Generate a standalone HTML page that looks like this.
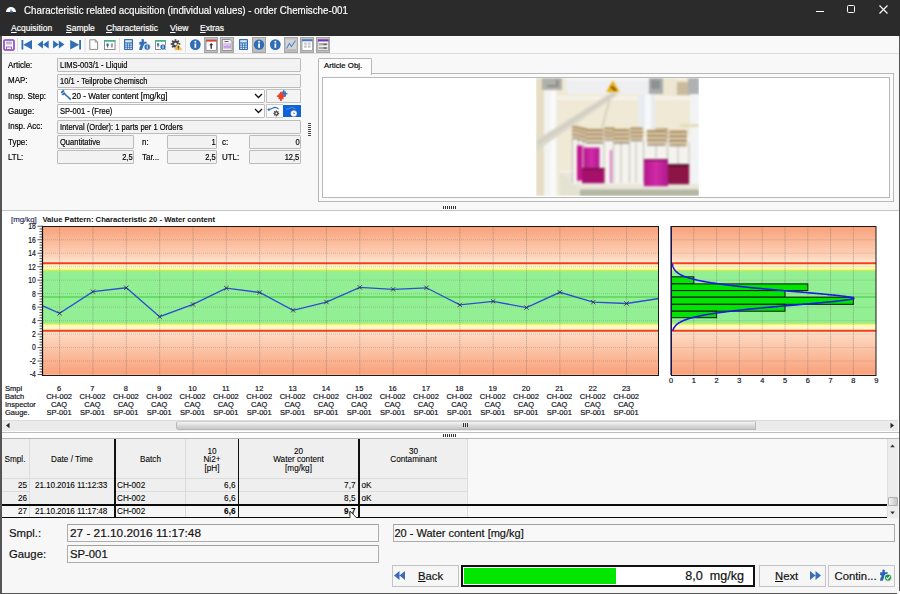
<!DOCTYPE html>
<html><head><meta charset="utf-8">
<style>
*{box-sizing:border-box;margin:0;padding:0}
html,body{width:900px;height:594px;overflow:hidden}
body{position:relative;background:#f8f8f8;font-family:"Liberation Sans",sans-serif;color:#000}
.a{position:absolute}
.t{position:absolute;white-space:pre;line-height:1}
#title{left:0;top:0;width:900px;height:36px;background:#2b2b2b}
#tb{left:0;top:36px;width:900px;height:18px;background:#f9f9f9;border-top:1px solid #fdfdfd;border-bottom:1.5px solid #dddddd}
.fld{position:absolute;height:14px;border:1px solid #bcbcbc;border-radius:1px;background:#f2f2f2;font-size:8.4px;line-height:12px;padding-left:2px;white-space:pre;overflow:hidden}
.lbl{position:absolute;font-size:8.4px;white-space:pre;line-height:1}
.r{text-align:right;padding-right:0.5px;padding-left:0}
.sep{position:absolute;width:1px;background:#dcdcdc}
.fld,.lbl,.t{-webkit-text-stroke:0.18px currentColor}
.n{display:inline-block;transform:scaleX(.9);transform-origin:0 50%}
.nr{display:inline-block;transform:scaleX(.9);transform-origin:100% 50%}
.nl{display:inline-block;transform:scaleX(.95);transform-origin:0 50%}
u{text-underline-offset:0.6px;text-decoration-thickness:1px}
.tbtn{position:absolute;top:37px;height:15px;background:#c9c9c9;border:1px solid #a8a8a8}
</style></head><body>

<!-- window borders -->
<div class="a" style="left:0;top:36px;width:1.5px;height:558px;background:#555;z-index:50"></div>
<div class="a" style="left:899px;top:36px;width:1px;height:555px;background:#555;z-index:50"></div>
<div class="a" style="left:0;top:592.5px;width:897px;height:1.5px;background:#555;z-index:50"></div><div class="a" style="left:0;top:594px;width:900px;height:0px"></div>

<!-- title + menu -->
<div id="title" class="a">
  <svg class="a" style="left:5px;top:4px" width="12" height="9" viewBox="0 0 12 9">
    <path d="M1 8 A5 5 0 0 1 11 8 Z" fill="#fff"/>
    <path d="M5 8 L6 4.5 L7 8 Z" fill="#3d7cc9"/>
    <rect x="5" y="7" width="3" height="1.5" fill="#3d7cc9"/>
  </svg>
  <div class="t" style="left:24px;top:4.6px;font-size:10.7px;color:#fff;transform:scaleX(0.912);transform-origin:0 0">Characteristic related acquisition (individual values) - order Chemische-001</div>
  <div class="a" style="left:816px;top:11px;width:8px;height:1px;background:#fff"></div>
  <div class="a" style="left:847px;top:5px;width:8px;height:8px;border:1px solid #fff;border-radius:1.5px"></div>
  <svg class="a" style="left:879px;top:5px" width="9" height="9" viewBox="0 0 9 9"><path d="M0.5 0.5 L8.5 8.5 M8.5 0.5 L0.5 8.5" stroke="#fff" stroke-width="1.1"/></svg>
  <div class="t" style="left:11px;top:23.5px;font-size:8.5px;color:#fff"><u>A</u>cquisition</div>
  <div class="t" style="left:66px;top:23.5px;font-size:8.5px;color:#fff"><u>S</u>ample</div>
  <div class="t" style="left:106px;top:23.5px;font-size:8.5px;color:#fff"><u>C</u>haracteristic</div>
  <div class="t" style="left:170px;top:23.5px;font-size:8.5px;color:#fff"><u>V</u>iew</div>
  <div class="t" style="left:200px;top:23.5px;font-size:8.5px;color:#fff"><u>E</u>xtras</div>
</div>

<!-- toolbar -->
<div id="tb" class="a"></div>
<svg class="a" style="left:0;top:36px" width="340" height="18" viewBox="0 36 340 18">
 <defs>
  <linearGradient id="tgl" x1="0" y1="0" x2="0" y2="1"><stop offset="0" stop-color="#c4c4c4"/><stop offset="1" stop-color="#bdbdbd"/></linearGradient>
 </defs>
 <!-- separators -->
 <g fill="#dedede"><rect x="17" y="38" width="1" height="14"/><rect x="84.5" y="38" width="1" height="14"/><rect x="119" y="38" width="1" height="14"/><rect x="185" y="38" width="1" height="14"/></g>
 <!-- save -->
 <rect x="4" y="40" width="10" height="10" rx="1" fill="none" stroke="#8b3fc0" stroke-width="1.6"/>
 <rect x="6" y="41.5" width="6" height="3" fill="#b8b8c8"/>
 <rect x="6.5" y="47" width="5" height="2.5" fill="#fff" stroke="#8b3fc0" stroke-width="0.8"/>
 <!-- first -->
 <g fill="#2f6db5">
  <rect x="21.5" y="40" width="1.8" height="9.5"/>
  <path d="M23.3 44.7 L32 40 L32 49.5 Z"/>
  <path d="M37.5 44.5 L43 40.5 L43 48.5 Z M43 44.5 L48.7 40.5 L48.7 48.5 Z"/>
  <path d="M64.4 44.5 L58.8 40.5 L58.8 48.5 Z M58.8 44.5 L53.1 40.5 L53.1 48.5 Z"/>
  <path d="M79.2 44.7 L70.2 40 L70.2 49.5 Z"/>
  <rect x="79.2" y="40" width="1.8" height="9.5"/>
 </g>
 <!-- document -->
 <path d="M89.8 39.8 H95.5 L97.6 42 V49.4 H89.8 Z" fill="#fff" stroke="#8a8a8a" stroke-width="1"/>
 <path d="M95.3 39.8 V42.2 H97.6" fill="none" stroke="#8a8a8a" stroke-width="0.8"/>
 <!-- window icon -->
 <rect x="104.5" y="41" width="10.5" height="8.5" fill="#fff" stroke="#8a8a8a" stroke-width="1"/>
 <rect x="104" y="40" width="11.5" height="1.5" fill="#3cb878"/>
 <rect x="106.5" y="43.5" width="2.2" height="2.5" fill="#2f6db5"/><rect x="110.8" y="43.5" width="2.2" height="2.5" fill="#a0a0a0"/>
 <rect x="107" y="46" width="1.2" height="1.5" fill="#666"/><rect x="111.3" y="46" width="1.2" height="1.5" fill="#666"/>
 <!-- calculator -->
 <rect x="124" y="39" width="9" height="11" rx="0.8" fill="#2f6db5"/>
 <rect x="125.2" y="40.2" width="6.6" height="2.2" fill="#dfe8f4"/>
 <g fill="#fff"><rect x="125.3" y="43.5" width="1.5" height="1.2"/><rect x="127.8" y="43.5" width="1.5" height="1.2"/><rect x="130.3" y="43.5" width="1.5" height="1.2"/>
 <rect x="125.3" y="45.6" width="1.5" height="1.2"/><rect x="127.8" y="45.6" width="1.5" height="1.2"/><rect x="130.3" y="45.6" width="1.5" height="1.2"/>
 <rect x="125.3" y="47.7" width="1.5" height="1.2"/><rect x="127.8" y="47.7" width="1.5" height="1.2"/><rect x="130.3" y="47.7" width="1.5" height="1.2"/></g>
 <!-- puzzle i -->
 <g transform="translate(139.2 39) scale(0.98) translate(-880 -569.5)">
 <path d="M882.3 569.8 Q883.7 569.2 884.9 570 L884.7 572.2 H887.8 L887.4 574.3 H885.2 L884.2 577 L882.8 580.8 H880 L880.6 577.4 Q882 576.5 881.2 575.2 L880 575 L880.3 572.2 H882.6 Z" fill="#2f6db5"/>
 </g>
 <circle cx="147.2" cy="47" r="3.2" fill="#2f6db5" stroke="#f9f9f9" stroke-width="0.7"/>
 <rect x="146.7" y="46.2" width="1" height="2.4" fill="#fff"/><rect x="146.7" y="44.7" width="1" height="0.9" fill="#fff"/>
 <!-- window i -->
 <rect x="155.5" y="41" width="10" height="8.5" fill="#fff" stroke="#8a8a8a" stroke-width="1"/>
 <rect x="155" y="40" width="11" height="1.5" fill="#3cb878"/>
 <rect x="157" y="43.3" width="2.2" height="2.3" fill="#2f6db5"/><rect x="157.5" y="45.6" width="1.2" height="1.5" fill="#666"/>
 <circle cx="163" cy="47" r="3" fill="#2f6db5" stroke="#fff" stroke-width="0.6"/>
 <rect x="162.5" y="46.2" width="1" height="2.3" fill="#fff"/><rect x="162.5" y="44.8" width="1" height="0.9" fill="#fff"/>
 <!-- gear warning -->
 <g transform="translate(175.5 44)">
  <circle r="3.2" fill="#4a4a4a"/>
  <g fill="#4a4a4a"><rect x="-0.9" y="-4.8" width="1.8" height="9.6"/><rect x="-4.8" y="-0.9" width="9.6" height="1.8"/>
  <rect x="-0.9" y="-4.8" width="1.8" height="9.6" transform="rotate(45)"/><rect x="-0.9" y="-4.8" width="1.8" height="9.6" transform="rotate(-45)"/></g>
  <circle r="1.3" fill="#f9f9f9"/>
 </g>
 <path d="M178.3 43.8 L182.8 50.2 H173.8 Z" fill="#f2b535" stroke="#f9f9f9" stroke-width="0.6"/>
 <rect x="177.85" y="46" width="0.9" height="2.3" fill="#222"/><rect x="177.85" y="48.7" width="0.9" height="0.8" fill="#222"/>
 <!-- info -->
 <circle cx="195.3" cy="44.6" r="5.4" fill="#2f6db5"/>
 <rect x="194.5" y="43.5" width="1.7" height="4.3" fill="#fff"/><circle cx="195.35" cy="41.8" r="0.95" fill="#fff"/>
 <!-- toggled buttons -->
 <g fill="url(#tgl)" stroke="#a6a6a6" stroke-width="1">
  <rect x="204.5" y="37.5" width="13" height="15"/>
  <rect x="220.5" y="37.5" width="13" height="15"/>
  <rect x="252.5" y="37.5" width="13" height="15"/>
  <rect x="284.5" y="37.5" width="13" height="15"/>
  <rect x="300.5" y="37.5" width="13" height="15"/>
  <rect x="316.5" y="37.5" width="13" height="15"/>
 </g>
 <!-- calendar up -->
 <rect x="206" y="39.8" width="10.5" height="10.5" fill="#fff" stroke="#8a8a8a" stroke-width="0.8"/>
 <rect x="206" y="40" width="10.5" height="1.6" fill="#e33b2a"/>
 <path d="M211.2 43 L213.3 45.3 H211.9 V48.8 H210.5 V45.3 H209.1 Z" fill="#333"/>
 <!-- doc purple -->
 <path d="M222.3 39.5 H230 L232 41.5 V50.5 H222.3 Z" fill="#f0f0f0" stroke="#8a8a8a" stroke-width="0.9"/>
 <rect x="223.5" y="43.5" width="7.5" height="5" fill="#c6a0e0"/>
 <rect x="224.2" y="44.2" width="2.5" height="1.6" fill="#e6d4f2"/><rect x="227.5" y="44.2" width="2.5" height="1.6" fill="#e6d4f2"/>
 <rect x="224.5" y="41" width="4" height="1" fill="#666"/>
 <!-- calculator 2 -->
 <rect x="239" y="39" width="9" height="11" rx="0.8" fill="#2f6db5"/>
 <rect x="240.2" y="40.2" width="6.6" height="2.2" fill="#dfe8f4"/>
 <g fill="#fff"><rect x="240.3" y="43.5" width="1.5" height="1.2"/><rect x="242.8" y="43.5" width="1.5" height="1.2"/><rect x="245.3" y="43.5" width="1.5" height="1.2"/>
 <rect x="240.3" y="45.6" width="1.5" height="1.2"/><rect x="242.8" y="45.6" width="1.5" height="1.2"/><rect x="245.3" y="45.6" width="1.5" height="1.2"/>
 <rect x="240.3" y="47.7" width="1.5" height="1.2"/><rect x="242.8" y="47.7" width="1.5" height="1.2"/><rect x="245.3" y="47.7" width="1.5" height="1.2"/></g>
 <!-- info toggled -->
 <circle cx="259" cy="44.6" r="5.2" fill="#2f6db5"/>
 <rect x="258.2" y="43.5" width="1.7" height="4.3" fill="#fff"/><circle cx="259.05" cy="41.8" r="0.95" fill="#fff"/>
 <!-- info 2 -->
 <circle cx="275.3" cy="44.6" r="5.4" fill="#2f6db5"/>
 <rect x="274.5" y="43.5" width="1.7" height="4.3" fill="#fff"/><circle cx="275.35" cy="41.8" r="0.95" fill="#fff"/>
 <!-- chart toggled -->
 <rect x="286" y="39.5" width="10.5" height="11" fill="#d4d4d4"/>
 <path d="M286.5 48.5 L289.5 43.5 L291.5 46.5 L295.5 40.5" fill="none" stroke="#4f86c8" stroke-width="1.1"/>
 <path d="M286.5 50 L296 50" stroke="#9a9a9a" stroke-width="0.8"/>
 <!-- table toggled -->
 <rect x="302" y="39.5" width="10.5" height="11" fill="#fff" stroke="#9a9a9a" stroke-width="0.8"/>
 <rect x="302" y="39.5" width="10.5" height="1.8" fill="#3f7bc8"/>
 <g fill="#c8c8c8"><rect x="304" y="42.5" width="2.8" height="2.2"/><rect x="307.8" y="42.5" width="2.8" height="2.2"/><rect x="304" y="45.5" width="2.8" height="2.2"/><rect x="307.8" y="45.5" width="2.8" height="2.2"/></g>
 <!-- purple list toggled -->
 <rect x="318" y="39.5" width="10.5" height="11" fill="#fff" stroke="#9a9a9a" stroke-width="0.8"/>
 <rect x="318" y="39.5" width="10.5" height="2" fill="#7a2fb8"/>
 <g fill="#aaa"><rect x="319" y="43" width="8.5" height="2.5"/><rect x="319" y="46.8" width="8.5" height="2.5"/></g>
 <g fill="#444"><rect x="323.5" y="43.8" width="3" height="0.9"/><rect x="323.5" y="47.6" width="3" height="0.9"/></g>
</svg>


<!-- form -->
<div class="lbl" style="left:8px;top:61.3px"><span class="nl">Article:</span></div>
<div class="fld" style="left:57px;top:58px;width:244px"><span class="n">LIMS-003/1 - Lliquid</span></div>
<div class="lbl" style="left:8px;top:76.3px"><span class="nl">MAP:</span></div>
<div class="fld" style="left:57px;top:74px;width:244px"><span class="n">10/1 - Teilprobe Chemisch</span></div>
<div class="lbl" style="left:8px;top:92.3px"><span class="nl">Insp. Step:</span></div>
<div class="fld" style="left:57px;top:89px;width:208px;background:#fff;padding-left:13.5px"><span class="n" style="transform:scaleX(.97)">20 - Water content [mg/kg]</span></div>
<div class="lbl" style="left:8px;top:107.3px"><span class="nl">Gauge:</span></div>
<div class="fld" style="left:57px;top:104px;width:208px;background:#fff"><span class="n">SP-001 - (Free)</span></div>
<div class="lbl" style="left:8px;top:122.3px"><span class="nl">Insp. Acc:</span></div>
<div class="fld" style="left:57px;top:120px;width:244px"><span class="n">Interval (Order): 1 parts per 1 Orders</span></div>
<div class="lbl" style="left:8px;top:138.3px"><span class="nl">Type:</span></div>
<div class="fld" style="left:57px;top:135px;width:77px"><span class="n">Quantitative</span></div>
<div class="lbl" style="left:142px;top:138.3px"><span class="nl">n:</span></div>
<div class="fld r" style="left:167px;top:135px;width:50px"><span class="nr">1</span></div>
<div class="lbl" style="left:222px;top:138.3px"><span class="nl">c:</span></div>
<div class="fld r" style="left:249px;top:135px;width:52px"><span class="nr">0</span></div>
<div class="lbl" style="left:8px;top:153.3px"><span class="nl">LTL:</span></div>
<div class="fld r" style="left:57px;top:150px;width:77px"><span class="nr">2,5</span></div>
<div class="lbl" style="left:142px;top:153.3px"><span class="nl">Tar...</span></div>
<div class="fld r" style="left:167px;top:150px;width:50px"><span class="nr">2,5</span></div>
<div class="lbl" style="left:222px;top:153.3px"><span class="nl">UTL:</span></div>
<div class="fld r" style="left:249px;top:150px;width:52px"><span class="nr">12,5</span></div>
<!--FORMEXTRA--><svg class="a" style="left:57px;top:88px" width="16" height="14" viewBox="57 88 16 14">
 <path d="M60.5 92.2 L63.3 89.8 L64.6 91 L61.8 93.5 Z" fill="#2f6db5"/>
 <path d="M61.6 94.2 L64.2 91.9 L65.6 93.3 L63 95.6 Z" fill="#2f6db5"/>
 <path d="M64.2 93.5 L70.8 99.6" stroke="#2f6db5" stroke-width="1.6"/>
</svg>
<svg class="a" style="left:254px;top:93px" width="9" height="6" viewBox="0 0 9 6"><path d="M1 1 L4.5 4.5 L8 1" fill="none" stroke="#111" stroke-width="1.3"/></svg>
<svg class="a" style="left:254px;top:108px" width="9" height="6" viewBox="0 0 9 6"><path d="M1 1 L4.5 4.5 L8 1" fill="none" stroke="#111" stroke-width="1.3"/></svg>
<div class="a" style="left:265.5px;top:89px;width:35.5px;height:13.5px;border:1px solid #c2c2c2;background:#f4f4f4"></div>
<svg class="a" style="left:276px;top:90px" width="14" height="12" viewBox="276 90 14 12">
 <path d="M281.5 91.5 H283 V90.8 A0.8 0.8 0 0 1 284.6 90.8 V91.5 H286 V93 H286.8 A0.8 0.8 0 0 1 286.8 94.6 H286 V96.5 H281.5 Z" fill="#3a78c8"/>
 <path d="M278.5 93.5 H280 V92.6 A0.9 0.9 0 0 1 281.8 92.6 V93.5 H283.5 V95.2 H284.4 A0.9 0.9 0 0 1 284.4 97 H283.5 V99.2 H281.8 V100.2 A0.9 0.9 0 0 1 280 100.2 V99.2 H278.5 V97 H277.6 A0.9 0.9 0 0 1 277.6 95.2 H278.5 Z" fill="#e8402a"/>
</svg>
<div class="a" style="left:265.5px;top:104.3px;width:17px;height:13.3px;border:1px solid #c8c8c8;border-right:none;background:#fafafa"></div>
<div class="a" style="left:283px;top:104.8px;width:17.5px;height:12.7px;background:#0f63d8"></div>
<svg class="a" style="left:266px;top:105px" width="35" height="13" viewBox="266 105 35 13">
 <circle cx="268.8" cy="109.6" r="1.2" fill="#2f6db5"/>
 <path d="M268.8 109.6 Q271 109 273 108 Q275.5 106.5 278.5 109" fill="none" stroke="#2f6db5" stroke-width="1.2"/>
 <g transform="translate(276.3 113.4)"><circle r="2.1" fill="#4a4a4a"/><g fill="#4a4a4a"><rect x="-0.6" y="-2.9" width="1.2" height="5.8"/><rect x="-2.9" y="-0.6" width="5.8" height="1.2"/><rect x="-0.6" y="-2.9" width="1.2" height="5.8" transform="rotate(45)"/><rect x="-0.6" y="-2.9" width="1.2" height="5.8" transform="rotate(-45)"/></g><circle r="0.9" fill="#fafafa"/></g>
 <path d="M286 109.6 Q288 109 290 108 Q292.5 106.5 295.5 109" fill="none" stroke="#5a8ad8" stroke-width="1"/>
 <circle cx="293.8" cy="113.5" r="3" fill="#fff" stroke="#d9b070" stroke-width="0.5"/>
 <path d="M293.5 112 L295.2 113.8 L293.5 114.2 Z" fill="#2f6db5"/>
</svg>
<div class="a" style="left:308px;top:122.6px;width:3px;height:14px;background:repeating-linear-gradient(180deg,#444 0 1px,transparent 1px 2px)"></div>
<!--/FORMEXTRA-->

<!-- right panel -->
<div class="a" style="left:317.5px;top:73px;width:576.5px;height:129px;border:1.5px solid #b8b8b8;background:#fbfbfb"></div>
<div class="a" style="left:317.5px;top:58px;width:54.5px;height:16.5px;border:1.5px solid #b8b8b8;border-bottom:none;border-radius:1.5px 1.5px 0 0;background:#fdfdfd"></div>
<div class="t" style="left:324px;top:62px;font-size:7.8px">Article Obj.</div>
<div class="a" style="left:321.5px;top:77px;width:568.5px;height:121px;border:1.5px solid #b8b8b8;background:#fff"></div>
<div class="a" style="left:536px;top:78px;width:163px;height:118px;overflow:hidden"><svg style="filter:blur(0.9px);display:block" width="163" height="118" viewBox="536 78 163 118">
 <defs>
  <filter id="bl" x="0" y="0" width="1" height="1"><feGaussianBlur stdDeviation="0.55"/></filter>
  <linearGradient id="cap" x1="0" y1="0" x2="0" y2="1"><stop offset="0" stop-color="#e0d2b4"/><stop offset="0.14" stop-color="#9c7c4c"/><stop offset="0.28" stop-color="#f2e6cc"/><stop offset="0.42" stop-color="#94744a"/><stop offset="0.56" stop-color="#f4ead4"/><stop offset="0.7" stop-color="#9a7a4e"/><stop offset="0.85" stop-color="#ece0c6"/><stop offset="1" stop-color="#a8946e"/></linearGradient>
  <linearGradient id="glass" x1="0" y1="0" x2="1" y2="0"><stop offset="0" stop-color="#f4f2ee"/><stop offset="0.5" stop-color="#e6e4e0"/><stop offset="1" stop-color="#f6f4f2"/></linearGradient>
  <linearGradient id="mag" x1="0" y1="0" x2="1" y2="0"><stop offset="0" stop-color="#b4168a"/><stop offset="0.5" stop-color="#d02aa8"/><stop offset="1" stop-color="#b01a8c"/></linearGradient>
 </defs>
 <g>
 <rect x="536" y="78" width="163" height="118" fill="#efe9d5"/>
 <rect x="536" y="78" width="8" height="118" fill="#e6ddc4"/>
 <rect x="544" y="90" width="13" height="106" fill="#f3f3f2"/>
 <rect x="551" y="90" width="4" height="106" fill="#fbfbfc"/>
 <rect x="542" y="78" width="20" height="12" fill="#b0b0aa"/>
 <path d="M547 85 H556 V80 H558.5 V87 H547 Z" fill="#8c8c86"/>
 <rect x="557" y="96" width="142" height="4" fill="#f5f2e8"/>
 <path d="M566 78 H649 V89 Q649 94 644 94 H571 Q566 94 566 89 Z" fill="#eeeff1"/>
 <path d="M569 78 H649 V81 H569 Z" fill="#f4f4f5"/>
 <path d="M612.9 80.6 L619.5 92 H606.3 Z" fill="#ecac00"/>
 <path d="M611 86.5 L613.5 88.5 L616.2 90.5" stroke="#1a1a1a" stroke-width="1.3" fill="none"/>
 <rect x="649" y="78" width="14" height="16" fill="#a8acac"/>
 <rect x="651" y="80" width="9" height="9" fill="#8e9292"/>
 <rect x="663" y="78" width="14" height="18" fill="#ece6d2"/>
 <rect x="677" y="82" width="11" height="13" fill="#c9bb9c"/>
 <rect x="688" y="78" width="11" height="17" fill="#aeb2b2"/>
 <rect x="638" y="94" width="17" height="36" fill="#e8ecf0"/>
 <rect x="645" y="94" width="6" height="36" fill="#f7f8fa"/>
 <rect x="690" y="94" width="9" height="102" fill="#f2f3f5"/>
 <rect x="680" y="124" width="19" height="3" fill="#e6dcbc"/>
 <path d="M536 140 L612 92 L619 94 L536 151 Z" fill="#dad6ca"/>
 <path d="M538 143 L614 94" stroke="#c2beb2" stroke-width="1.8" stroke-dasharray="1.2 1.3"/>
 <path d="M601.5 130 L609.5 100" stroke="#d6d1bc" stroke-width="2"/>
<!-- tray -->
 <path d="M560 171.5 H578 L590 183 L699 184 V196 H560 Z" fill="#e9e7da"/>
 <path d="M560 171.5 H576" stroke="#f8f8f2" stroke-width="1.2" fill="none"/>
 <rect x="580" y="189.5" width="119" height="6.5" fill="#b2b6a2"/>
 <path d="M560 172 L580 189.5 V196 H560 Z" fill="#e4e2d2"/>
  <!-- glass -->
 <rect x="572" y="136" width="118" height="48" fill="#f6f5f2" opacity="0.8"/>
 <g stroke="#b8b6b0" stroke-width="0.9" fill="none">
  <path d="M572.5 138 V183 M578.5 138 V183 M584 140 V183 M604 140 V183 M613.5 140 V183 M629.5 140 V183 M643.5 140 V183 M667.5 142 V183 M689 142 V183 M621 142 V183 M636 142 V183 M656 145 V158 M678 145 V164"/>
 </g>
 <!-- caps -->
 <rect x="572" y="125.5" width="7" height="12.5" rx="1.8" fill="url(#cap)"/>
 <rect x="572.5" y="137.8" width="6" height="1.6" fill="#8c8270" opacity="0.7"/>
 <rect x="577" y="126.5" width="7" height="12.5" rx="1.8" fill="url(#cap)"/>
 <rect x="577.5" y="138.8" width="6" height="1.6" fill="#8c8270" opacity="0.7"/>
 <rect x="581" y="127.5" width="7" height="13" rx="1.8" fill="url(#cap)"/>
 <rect x="581.5" y="140.3" width="6" height="1.6" fill="#8c8270" opacity="0.7"/>
 <rect x="604" y="127" width="11" height="12.5" rx="1.8" fill="url(#cap)"/>
 <rect x="604.5" y="139.3" width="10" height="1.6" fill="#8c8270" opacity="0.7"/>
 <rect x="630" y="127" width="13" height="13" rx="1.8" fill="url(#cap)"/>
 <rect x="630.5" y="139.8" width="12" height="1.6" fill="#8c8270" opacity="0.7"/>
 <rect x="655" y="128" width="13" height="13" rx="1.8" fill="url(#cap)"/>
 <rect x="655.5" y="140.8" width="12" height="1.6" fill="#8c8270" opacity="0.7"/>
 <rect x="585.5" y="128.5" width="18" height="14" rx="1.8" fill="url(#cap)"/>
 <rect x="586.0" y="142.3" width="17" height="1.6" fill="#8c8270" opacity="0.7"/>
 <rect x="613.5" y="128.5" width="16" height="14" rx="1.8" fill="url(#cap)"/>
 <rect x="614.0" y="142.3" width="15" height="1.6" fill="#8c8270" opacity="0.7"/>
 <rect x="647" y="129.5" width="19" height="15" rx="1.8" fill="url(#cap)"/>
 <rect x="647.5" y="144.3" width="18" height="1.6" fill="#8c8270" opacity="0.7"/>
 <rect x="669" y="130" width="18" height="15" rx="1.8" fill="url(#cap)"/>
 <rect x="669.5" y="144.8" width="17" height="1.6" fill="#8c8270" opacity="0.7"/>
 <!-- liquids -->
 <rect x="577" y="145.5" width="5.5" height="35" fill="#c2168e"/>
 <rect x="583.5" y="147.5" width="16" height="21" fill="url(#mag)"/>
 <rect x="582" y="168" width="22.5" height="15.2" fill="#a5106a"/>
 <rect x="582" y="168" width="22.5" height="1.4" fill="#6e0c42"/>
 <rect x="610" y="150" width="2" height="33" fill="#d878c4"/>
 <rect x="644" y="159.4" width="24" height="26.8" fill="url(#mag)"/>
 <rect x="644" y="159.4" width="24" height="1.6" fill="#7c0c58"/>
 <rect x="668" y="164.4" width="21" height="19.8" fill="#8c1446"/>
 <rect x="668" y="164.4" width="21" height="1.8" fill="#3c0c20"/>
 </g>
</svg></div>


<!-- separator -->
<div class="a" style="left:443px;top:206px;width:14px;height:3px;background:repeating-linear-gradient(90deg,#333 0 1px,transparent 1px 2px)"></div>
<div class="a" style="left:0;top:210px;width:900px;height:1px;background:#c4c4c4"></div>
<div class="a" style="left:0;top:211px;width:900px;height:221px;background:#fff"></div>
<!--CHART--><svg class="a" style="left:0;top:211px" width="900" height="221" viewBox="0 211 900 221">
<defs>
<linearGradient id="orT" x1="0" y1="0" x2="0" y2="1"><stop offset="0" stop-color="#f9a07a"/><stop offset="0.85" stop-color="#fdd6bc"/><stop offset="1" stop-color="#ffeedc"/></linearGradient>
<linearGradient id="orB" x1="0" y1="0" x2="0" y2="1"><stop offset="0" stop-color="#ffe6d4"/><stop offset="0.12" stop-color="#fdd6bc"/><stop offset="1" stop-color="#f9a07a"/></linearGradient>
<linearGradient id="ylT" x1="0" y1="0" x2="0" y2="1"><stop offset="0" stop-color="#ffff9c"/><stop offset="0.45" stop-color="#fff6d4"/><stop offset="0.8" stop-color="#fff8c0"/><stop offset="1" stop-color="#f8f870"/></linearGradient>
<linearGradient id="ylB" x1="0" y1="1" x2="0" y2="0"><stop offset="0" stop-color="#ffff9c"/><stop offset="0.45" stop-color="#fff6d4"/><stop offset="0.8" stop-color="#fff8c0"/><stop offset="1" stop-color="#f8f870"/></linearGradient>
</defs>
<rect x="43" y="226.25" width="615.5" height="37.07" fill="url(#orT)"/>
<rect x="43" y="263.32" width="615.5" height="6.74" fill="url(#ylT)"/>
<rect x="43" y="270.06" width="615.5" height="53.92" fill="#93ef93"/>
<rect x="43" y="323.98" width="615.5" height="6.74" fill="url(#ylB)"/>
<rect x="43" y="330.72" width="615.5" height="44.03" fill="url(#orB)"/>
<line x1="43" x2="658.5" y1="270.06" y2="270.06" stroke="#eef22c" stroke-width="1.2"/>
<line x1="43" x2="658.5" y1="323.98" y2="323.98" stroke="#eef22c" stroke-width="1.2"/>
<line x1="43" x2="658.5" y1="239.73" y2="239.73" stroke="#606060" stroke-opacity="0.25" stroke-width="1" stroke-dasharray="1 1"/>
<line x1="43" x2="658.5" y1="253.21" y2="253.21" stroke="#606060" stroke-opacity="0.25" stroke-width="1" stroke-dasharray="1 1"/>
<line x1="43" x2="658.5" y1="266.69" y2="266.69" stroke="#606060" stroke-opacity="0.25" stroke-width="1" stroke-dasharray="1 1"/>
<line x1="43" x2="658.5" y1="280.17" y2="280.17" stroke="#606060" stroke-opacity="0.25" stroke-width="1" stroke-dasharray="1 1"/>
<line x1="43" x2="658.5" y1="293.65" y2="293.65" stroke="#606060" stroke-opacity="0.25" stroke-width="1" stroke-dasharray="1 1"/>
<line x1="43" x2="658.5" y1="307.13" y2="307.13" stroke="#606060" stroke-opacity="0.25" stroke-width="1" stroke-dasharray="1 1"/>
<line x1="43" x2="658.5" y1="320.61" y2="320.61" stroke="#606060" stroke-opacity="0.25" stroke-width="1" stroke-dasharray="1 1"/>
<line x1="43" x2="658.5" y1="334.09" y2="334.09" stroke="#606060" stroke-opacity="0.25" stroke-width="1" stroke-dasharray="1 1"/>
<line x1="43" x2="658.5" y1="347.57" y2="347.57" stroke="#606060" stroke-opacity="0.25" stroke-width="1" stroke-dasharray="1 1"/>
<line x1="43" x2="658.5" y1="361.05" y2="361.05" stroke="#606060" stroke-opacity="0.25" stroke-width="1" stroke-dasharray="1 1"/>
<line x1="43" x2="658.5" y1="297.02" y2="297.02" stroke="#3ccc3c" stroke-width="1.1"/>
<line x1="43" x2="658.5" y1="263.32" y2="263.32" stroke="#f83c1c" stroke-width="2"/>
<line x1="43" x2="658.5" y1="330.72" y2="330.72" stroke="#f83c1c" stroke-width="2"/>
<line x1="59.60" x2="59.60" y1="226.25" y2="374.75" stroke="#606060" stroke-opacity="0.45" stroke-width="1" stroke-dasharray="1 1"/>
<line x1="92.95" x2="92.95" y1="226.25" y2="374.75" stroke="#606060" stroke-opacity="0.45" stroke-width="1" stroke-dasharray="1 1"/>
<line x1="126.30" x2="126.30" y1="226.25" y2="374.75" stroke="#606060" stroke-opacity="0.45" stroke-width="1" stroke-dasharray="1 1"/>
<line x1="159.65" x2="159.65" y1="226.25" y2="374.75" stroke="#606060" stroke-opacity="0.45" stroke-width="1" stroke-dasharray="1 1"/>
<line x1="193.00" x2="193.00" y1="226.25" y2="374.75" stroke="#606060" stroke-opacity="0.45" stroke-width="1" stroke-dasharray="1 1"/>
<line x1="226.35" x2="226.35" y1="226.25" y2="374.75" stroke="#606060" stroke-opacity="0.45" stroke-width="1" stroke-dasharray="1 1"/>
<line x1="259.70" x2="259.70" y1="226.25" y2="374.75" stroke="#606060" stroke-opacity="0.45" stroke-width="1" stroke-dasharray="1 1"/>
<line x1="293.05" x2="293.05" y1="226.25" y2="374.75" stroke="#606060" stroke-opacity="0.45" stroke-width="1" stroke-dasharray="1 1"/>
<line x1="326.40" x2="326.40" y1="226.25" y2="374.75" stroke="#606060" stroke-opacity="0.45" stroke-width="1" stroke-dasharray="1 1"/>
<line x1="359.75" x2="359.75" y1="226.25" y2="374.75" stroke="#606060" stroke-opacity="0.45" stroke-width="1" stroke-dasharray="1 1"/>
<line x1="393.10" x2="393.10" y1="226.25" y2="374.75" stroke="#606060" stroke-opacity="0.45" stroke-width="1" stroke-dasharray="1 1"/>
<line x1="426.45" x2="426.45" y1="226.25" y2="374.75" stroke="#606060" stroke-opacity="0.45" stroke-width="1" stroke-dasharray="1 1"/>
<line x1="459.80" x2="459.80" y1="226.25" y2="374.75" stroke="#606060" stroke-opacity="0.45" stroke-width="1" stroke-dasharray="1 1"/>
<line x1="493.15" x2="493.15" y1="226.25" y2="374.75" stroke="#606060" stroke-opacity="0.45" stroke-width="1" stroke-dasharray="1 1"/>
<line x1="526.50" x2="526.50" y1="226.25" y2="374.75" stroke="#606060" stroke-opacity="0.45" stroke-width="1" stroke-dasharray="1 1"/>
<line x1="559.85" x2="559.85" y1="226.25" y2="374.75" stroke="#606060" stroke-opacity="0.45" stroke-width="1" stroke-dasharray="1 1"/>
<line x1="593.20" x2="593.20" y1="226.25" y2="374.75" stroke="#606060" stroke-opacity="0.45" stroke-width="1" stroke-dasharray="1 1"/>
<line x1="626.55" x2="626.55" y1="226.25" y2="374.75" stroke="#606060" stroke-opacity="0.45" stroke-width="1" stroke-dasharray="1 1"/>
<clipPath id="cp"><rect x="43" y="226" width="615.5" height="149"/></clipPath>
<path d="M26.25 298.77 L59.60 313.33 L92.95 291.63 L126.30 287.79 L159.65 316.70 L193.00 304.43 L226.35 288.19 L259.70 292.50 L293.05 310.30 L326.40 302.01 L359.75 287.38 L393.10 289.34 L426.45 287.79 L459.80 304.91 L493.15 301.33 L526.50 307.60 L559.85 292.30 L593.20 302.21 L626.55 303.49 L659.90 298.37" fill="none" stroke="#2a4ed6" stroke-width="1.3" clip-path="url(#cp)"/>
<path d="M57.40 311.13 L61.80 315.53 M61.80 311.13 L57.40 315.53" stroke="#2a2a3a" stroke-width="0.8"/>
<path d="M90.75 289.43 L95.15 293.83 M95.15 289.43 L90.75 293.83" stroke="#2a2a3a" stroke-width="0.8"/>
<path d="M124.10 285.59 L128.50 289.99 M128.50 285.59 L124.10 289.99" stroke="#2a2a3a" stroke-width="0.8"/>
<path d="M157.45 314.50 L161.85 318.90 M161.85 314.50 L157.45 318.90" stroke="#2a2a3a" stroke-width="0.8"/>
<path d="M190.80 302.23 L195.20 306.63 M195.20 302.23 L190.80 306.63" stroke="#2a2a3a" stroke-width="0.8"/>
<path d="M224.15 285.99 L228.55 290.39 M228.55 285.99 L224.15 290.39" stroke="#2a2a3a" stroke-width="0.8"/>
<path d="M257.50 290.30 L261.90 294.70 M261.90 290.30 L257.50 294.70" stroke="#2a2a3a" stroke-width="0.8"/>
<path d="M290.85 308.10 L295.25 312.50 M295.25 308.10 L290.85 312.50" stroke="#2a2a3a" stroke-width="0.8"/>
<path d="M324.20 299.81 L328.60 304.21 M328.60 299.81 L324.20 304.21" stroke="#2a2a3a" stroke-width="0.8"/>
<path d="M357.55 285.18 L361.95 289.58 M361.95 285.18 L357.55 289.58" stroke="#2a2a3a" stroke-width="0.8"/>
<path d="M390.90 287.14 L395.30 291.54 M395.30 287.14 L390.90 291.54" stroke="#2a2a3a" stroke-width="0.8"/>
<path d="M424.25 285.59 L428.65 289.99 M428.65 285.59 L424.25 289.99" stroke="#2a2a3a" stroke-width="0.8"/>
<path d="M457.60 302.71 L462.00 307.11 M462.00 302.71 L457.60 307.11" stroke="#2a2a3a" stroke-width="0.8"/>
<path d="M490.95 299.13 L495.35 303.53 M495.35 299.13 L490.95 303.53" stroke="#2a2a3a" stroke-width="0.8"/>
<path d="M524.30 305.40 L528.70 309.80 M528.70 305.40 L524.30 309.80" stroke="#2a2a3a" stroke-width="0.8"/>
<path d="M557.65 290.10 L562.05 294.50 M562.05 290.10 L557.65 294.50" stroke="#2a2a3a" stroke-width="0.8"/>
<path d="M591.00 300.01 L595.40 304.41 M595.40 300.01 L591.00 304.41" stroke="#2a2a3a" stroke-width="0.8"/>
<path d="M624.35 301.29 L628.75 305.69 M628.75 301.29 L624.35 305.69" stroke="#2a2a3a" stroke-width="0.8"/>
<rect x="42.5" y="226.5" width="616" height="149" fill="none" stroke="#1a1a1a" stroke-width="1"/>
<line x1="42.5" x2="42.5" y1="226" y2="376" stroke="#000" stroke-width="1.2"/>
<line x1="37.5" x2="43" y1="226.25" y2="226.25" stroke="#222" stroke-width="0.8"/>
<line x1="39.5" x2="43" y1="228.95" y2="228.95" stroke="#222" stroke-width="0.8"/>
<line x1="39.5" x2="43" y1="231.64" y2="231.64" stroke="#222" stroke-width="0.8"/>
<line x1="39.5" x2="43" y1="234.34" y2="234.34" stroke="#222" stroke-width="0.8"/>
<line x1="39.5" x2="43" y1="237.03" y2="237.03" stroke="#222" stroke-width="0.8"/>
<line x1="37.5" x2="43" y1="239.73" y2="239.73" stroke="#222" stroke-width="0.8"/>
<line x1="39.5" x2="43" y1="242.43" y2="242.43" stroke="#222" stroke-width="0.8"/>
<line x1="39.5" x2="43" y1="245.12" y2="245.12" stroke="#222" stroke-width="0.8"/>
<line x1="39.5" x2="43" y1="247.82" y2="247.82" stroke="#222" stroke-width="0.8"/>
<line x1="39.5" x2="43" y1="250.51" y2="250.51" stroke="#222" stroke-width="0.8"/>
<line x1="37.5" x2="43" y1="253.21" y2="253.21" stroke="#222" stroke-width="0.8"/>
<line x1="39.5" x2="43" y1="255.91" y2="255.91" stroke="#222" stroke-width="0.8"/>
<line x1="39.5" x2="43" y1="258.60" y2="258.60" stroke="#222" stroke-width="0.8"/>
<line x1="39.5" x2="43" y1="261.30" y2="261.30" stroke="#222" stroke-width="0.8"/>
<line x1="39.5" x2="43" y1="263.99" y2="263.99" stroke="#222" stroke-width="0.8"/>
<line x1="37.5" x2="43" y1="266.69" y2="266.69" stroke="#222" stroke-width="0.8"/>
<line x1="39.5" x2="43" y1="269.39" y2="269.39" stroke="#222" stroke-width="0.8"/>
<line x1="39.5" x2="43" y1="272.08" y2="272.08" stroke="#222" stroke-width="0.8"/>
<line x1="39.5" x2="43" y1="274.78" y2="274.78" stroke="#222" stroke-width="0.8"/>
<line x1="39.5" x2="43" y1="277.47" y2="277.47" stroke="#222" stroke-width="0.8"/>
<line x1="37.5" x2="43" y1="280.17" y2="280.17" stroke="#222" stroke-width="0.8"/>
<line x1="39.5" x2="43" y1="282.87" y2="282.87" stroke="#222" stroke-width="0.8"/>
<line x1="39.5" x2="43" y1="285.56" y2="285.56" stroke="#222" stroke-width="0.8"/>
<line x1="39.5" x2="43" y1="288.26" y2="288.26" stroke="#222" stroke-width="0.8"/>
<line x1="39.5" x2="43" y1="290.95" y2="290.95" stroke="#222" stroke-width="0.8"/>
<line x1="37.5" x2="43" y1="293.65" y2="293.65" stroke="#222" stroke-width="0.8"/>
<line x1="39.5" x2="43" y1="296.35" y2="296.35" stroke="#222" stroke-width="0.8"/>
<line x1="39.5" x2="43" y1="299.04" y2="299.04" stroke="#222" stroke-width="0.8"/>
<line x1="39.5" x2="43" y1="301.74" y2="301.74" stroke="#222" stroke-width="0.8"/>
<line x1="39.5" x2="43" y1="304.43" y2="304.43" stroke="#222" stroke-width="0.8"/>
<line x1="37.5" x2="43" y1="307.13" y2="307.13" stroke="#222" stroke-width="0.8"/>
<line x1="39.5" x2="43" y1="309.83" y2="309.83" stroke="#222" stroke-width="0.8"/>
<line x1="39.5" x2="43" y1="312.52" y2="312.52" stroke="#222" stroke-width="0.8"/>
<line x1="39.5" x2="43" y1="315.22" y2="315.22" stroke="#222" stroke-width="0.8"/>
<line x1="39.5" x2="43" y1="317.91" y2="317.91" stroke="#222" stroke-width="0.8"/>
<line x1="37.5" x2="43" y1="320.61" y2="320.61" stroke="#222" stroke-width="0.8"/>
<line x1="39.5" x2="43" y1="323.31" y2="323.31" stroke="#222" stroke-width="0.8"/>
<line x1="39.5" x2="43" y1="326.00" y2="326.00" stroke="#222" stroke-width="0.8"/>
<line x1="39.5" x2="43" y1="328.70" y2="328.70" stroke="#222" stroke-width="0.8"/>
<line x1="39.5" x2="43" y1="331.39" y2="331.39" stroke="#222" stroke-width="0.8"/>
<line x1="37.5" x2="43" y1="334.09" y2="334.09" stroke="#222" stroke-width="0.8"/>
<line x1="39.5" x2="43" y1="336.79" y2="336.79" stroke="#222" stroke-width="0.8"/>
<line x1="39.5" x2="43" y1="339.48" y2="339.48" stroke="#222" stroke-width="0.8"/>
<line x1="39.5" x2="43" y1="342.18" y2="342.18" stroke="#222" stroke-width="0.8"/>
<line x1="39.5" x2="43" y1="344.87" y2="344.87" stroke="#222" stroke-width="0.8"/>
<line x1="37.5" x2="43" y1="347.57" y2="347.57" stroke="#222" stroke-width="0.8"/>
<line x1="39.5" x2="43" y1="350.27" y2="350.27" stroke="#222" stroke-width="0.8"/>
<line x1="39.5" x2="43" y1="352.96" y2="352.96" stroke="#222" stroke-width="0.8"/>
<line x1="39.5" x2="43" y1="355.66" y2="355.66" stroke="#222" stroke-width="0.8"/>
<line x1="39.5" x2="43" y1="358.35" y2="358.35" stroke="#222" stroke-width="0.8"/>
<line x1="37.5" x2="43" y1="361.05" y2="361.05" stroke="#222" stroke-width="0.8"/>
<line x1="39.5" x2="43" y1="363.75" y2="363.75" stroke="#222" stroke-width="0.8"/>
<line x1="39.5" x2="43" y1="366.44" y2="366.44" stroke="#222" stroke-width="0.8"/>
<line x1="39.5" x2="43" y1="369.14" y2="369.14" stroke="#222" stroke-width="0.8"/>
<line x1="39.5" x2="43" y1="371.83" y2="371.83" stroke="#222" stroke-width="0.8"/>
<line x1="37.5" x2="43" y1="374.53" y2="374.53" stroke="#222" stroke-width="0.8"/>
<text transform="translate(35.8 229.15) scale(0.82 1)" font-size="8.3" text-anchor="end" fill="#101020" stroke="#101020" stroke-width="0.18">18</text>
<text transform="translate(35.8 242.63) scale(0.82 1)" font-size="8.3" text-anchor="end" fill="#101020" stroke="#101020" stroke-width="0.18">16</text>
<text transform="translate(35.8 256.11) scale(0.82 1)" font-size="8.3" text-anchor="end" fill="#101020" stroke="#101020" stroke-width="0.18">14</text>
<text transform="translate(35.8 269.59) scale(0.82 1)" font-size="8.3" text-anchor="end" fill="#101020" stroke="#101020" stroke-width="0.18">12</text>
<text transform="translate(35.8 283.07) scale(0.82 1)" font-size="8.3" text-anchor="end" fill="#101020" stroke="#101020" stroke-width="0.18">10</text>
<text transform="translate(35.8 296.55) scale(0.82 1)" font-size="8.3" text-anchor="end" fill="#101020" stroke="#101020" stroke-width="0.18">8</text>
<text transform="translate(35.8 310.03) scale(0.82 1)" font-size="8.3" text-anchor="end" fill="#101020" stroke="#101020" stroke-width="0.18">6</text>
<text transform="translate(35.8 323.51) scale(0.82 1)" font-size="8.3" text-anchor="end" fill="#101020" stroke="#101020" stroke-width="0.18">4</text>
<text transform="translate(35.8 336.99) scale(0.82 1)" font-size="8.3" text-anchor="end" fill="#101020" stroke="#101020" stroke-width="0.18">2</text>
<text transform="translate(35.8 350.47) scale(0.82 1)" font-size="8.3" text-anchor="end" fill="#101020" stroke="#101020" stroke-width="0.18">0</text>
<text transform="translate(35.8 363.95) scale(0.82 1)" font-size="8.3" text-anchor="end" fill="#101020" stroke="#101020" stroke-width="0.18">-2</text>
<text transform="translate(35.8 377.43) scale(0.82 1)" font-size="8.3" text-anchor="end" fill="#101020" stroke="#101020" stroke-width="0.18">-4</text>
<text x="11" y="221.8" font-size="7.9" fill="#2a2a55" stroke="#2a2a55" stroke-width="0.15" textLength="25.8" lengthAdjust="spacingAndGlyphs">[mg/kg]</text>
<text x="42.4" y="221.8" font-size="7.9" font-weight="bold" fill="#111" textLength="172.6" lengthAdjust="spacingAndGlyphs">Value Pattern: Characteristic 20 - Water content</text>
<text x="5" y="390.6" font-size="7.5" fill="#101020" stroke="#101020" stroke-width="0.18">Smpl</text>
<text x="5" y="398.9" font-size="7.5" fill="#101020" stroke="#101020" stroke-width="0.18">Batch</text>
<text x="5" y="407.2" font-size="7.5" fill="#101020" stroke="#101020" stroke-width="0.18">Inspector</text>
<text x="5" y="415.2" font-size="7.5" fill="#101020" stroke="#101020" stroke-width="0.18">Gauge.</text>
<text x="59.10" y="390.6" font-size="7.5" text-anchor="middle" fill="#101020" stroke="#101020" stroke-width="0.18">6</text>
<text x="59.10" y="398.9" font-size="7.5" text-anchor="middle" fill="#101020" stroke="#101020" stroke-width="0.18">CH-002</text>
<text x="59.10" y="407.2" font-size="7.5" text-anchor="middle" fill="#101020" stroke="#101020" stroke-width="0.18">CAQ</text>
<text x="59.10" y="415.2" font-size="7.5" text-anchor="middle" fill="#101020" stroke="#101020" stroke-width="0.18">SP-001</text>
<text x="92.45" y="390.6" font-size="7.5" text-anchor="middle" fill="#101020" stroke="#101020" stroke-width="0.18">7</text>
<text x="92.45" y="398.9" font-size="7.5" text-anchor="middle" fill="#101020" stroke="#101020" stroke-width="0.18">CH-002</text>
<text x="92.45" y="407.2" font-size="7.5" text-anchor="middle" fill="#101020" stroke="#101020" stroke-width="0.18">CAQ</text>
<text x="92.45" y="415.2" font-size="7.5" text-anchor="middle" fill="#101020" stroke="#101020" stroke-width="0.18">SP-001</text>
<text x="125.80" y="390.6" font-size="7.5" text-anchor="middle" fill="#101020" stroke="#101020" stroke-width="0.18">8</text>
<text x="125.80" y="398.9" font-size="7.5" text-anchor="middle" fill="#101020" stroke="#101020" stroke-width="0.18">CH-002</text>
<text x="125.80" y="407.2" font-size="7.5" text-anchor="middle" fill="#101020" stroke="#101020" stroke-width="0.18">CAQ</text>
<text x="125.80" y="415.2" font-size="7.5" text-anchor="middle" fill="#101020" stroke="#101020" stroke-width="0.18">SP-001</text>
<text x="159.15" y="390.6" font-size="7.5" text-anchor="middle" fill="#101020" stroke="#101020" stroke-width="0.18">9</text>
<text x="159.15" y="398.9" font-size="7.5" text-anchor="middle" fill="#101020" stroke="#101020" stroke-width="0.18">CH-002</text>
<text x="159.15" y="407.2" font-size="7.5" text-anchor="middle" fill="#101020" stroke="#101020" stroke-width="0.18">CAQ</text>
<text x="159.15" y="415.2" font-size="7.5" text-anchor="middle" fill="#101020" stroke="#101020" stroke-width="0.18">SP-001</text>
<text x="192.50" y="390.6" font-size="7.5" text-anchor="middle" fill="#101020" stroke="#101020" stroke-width="0.18">10</text>
<text x="192.50" y="398.9" font-size="7.5" text-anchor="middle" fill="#101020" stroke="#101020" stroke-width="0.18">CH-002</text>
<text x="192.50" y="407.2" font-size="7.5" text-anchor="middle" fill="#101020" stroke="#101020" stroke-width="0.18">CAQ</text>
<text x="192.50" y="415.2" font-size="7.5" text-anchor="middle" fill="#101020" stroke="#101020" stroke-width="0.18">SP-001</text>
<text x="225.85" y="390.6" font-size="7.5" text-anchor="middle" fill="#101020" stroke="#101020" stroke-width="0.18">11</text>
<text x="225.85" y="398.9" font-size="7.5" text-anchor="middle" fill="#101020" stroke="#101020" stroke-width="0.18">CH-002</text>
<text x="225.85" y="407.2" font-size="7.5" text-anchor="middle" fill="#101020" stroke="#101020" stroke-width="0.18">CAQ</text>
<text x="225.85" y="415.2" font-size="7.5" text-anchor="middle" fill="#101020" stroke="#101020" stroke-width="0.18">SP-001</text>
<text x="259.20" y="390.6" font-size="7.5" text-anchor="middle" fill="#101020" stroke="#101020" stroke-width="0.18">12</text>
<text x="259.20" y="398.9" font-size="7.5" text-anchor="middle" fill="#101020" stroke="#101020" stroke-width="0.18">CH-002</text>
<text x="259.20" y="407.2" font-size="7.5" text-anchor="middle" fill="#101020" stroke="#101020" stroke-width="0.18">CAQ</text>
<text x="259.20" y="415.2" font-size="7.5" text-anchor="middle" fill="#101020" stroke="#101020" stroke-width="0.18">SP-001</text>
<text x="292.55" y="390.6" font-size="7.5" text-anchor="middle" fill="#101020" stroke="#101020" stroke-width="0.18">13</text>
<text x="292.55" y="398.9" font-size="7.5" text-anchor="middle" fill="#101020" stroke="#101020" stroke-width="0.18">CH-002</text>
<text x="292.55" y="407.2" font-size="7.5" text-anchor="middle" fill="#101020" stroke="#101020" stroke-width="0.18">CAQ</text>
<text x="292.55" y="415.2" font-size="7.5" text-anchor="middle" fill="#101020" stroke="#101020" stroke-width="0.18">SP-001</text>
<text x="325.90" y="390.6" font-size="7.5" text-anchor="middle" fill="#101020" stroke="#101020" stroke-width="0.18">14</text>
<text x="325.90" y="398.9" font-size="7.5" text-anchor="middle" fill="#101020" stroke="#101020" stroke-width="0.18">CH-002</text>
<text x="325.90" y="407.2" font-size="7.5" text-anchor="middle" fill="#101020" stroke="#101020" stroke-width="0.18">CAQ</text>
<text x="325.90" y="415.2" font-size="7.5" text-anchor="middle" fill="#101020" stroke="#101020" stroke-width="0.18">SP-001</text>
<text x="359.25" y="390.6" font-size="7.5" text-anchor="middle" fill="#101020" stroke="#101020" stroke-width="0.18">15</text>
<text x="359.25" y="398.9" font-size="7.5" text-anchor="middle" fill="#101020" stroke="#101020" stroke-width="0.18">CH-002</text>
<text x="359.25" y="407.2" font-size="7.5" text-anchor="middle" fill="#101020" stroke="#101020" stroke-width="0.18">CAQ</text>
<text x="359.25" y="415.2" font-size="7.5" text-anchor="middle" fill="#101020" stroke="#101020" stroke-width="0.18">SP-001</text>
<text x="392.60" y="390.6" font-size="7.5" text-anchor="middle" fill="#101020" stroke="#101020" stroke-width="0.18">16</text>
<text x="392.60" y="398.9" font-size="7.5" text-anchor="middle" fill="#101020" stroke="#101020" stroke-width="0.18">CH-002</text>
<text x="392.60" y="407.2" font-size="7.5" text-anchor="middle" fill="#101020" stroke="#101020" stroke-width="0.18">CAQ</text>
<text x="392.60" y="415.2" font-size="7.5" text-anchor="middle" fill="#101020" stroke="#101020" stroke-width="0.18">SP-001</text>
<text x="425.95" y="390.6" font-size="7.5" text-anchor="middle" fill="#101020" stroke="#101020" stroke-width="0.18">17</text>
<text x="425.95" y="398.9" font-size="7.5" text-anchor="middle" fill="#101020" stroke="#101020" stroke-width="0.18">CH-002</text>
<text x="425.95" y="407.2" font-size="7.5" text-anchor="middle" fill="#101020" stroke="#101020" stroke-width="0.18">CAQ</text>
<text x="425.95" y="415.2" font-size="7.5" text-anchor="middle" fill="#101020" stroke="#101020" stroke-width="0.18">SP-001</text>
<text x="459.30" y="390.6" font-size="7.5" text-anchor="middle" fill="#101020" stroke="#101020" stroke-width="0.18">18</text>
<text x="459.30" y="398.9" font-size="7.5" text-anchor="middle" fill="#101020" stroke="#101020" stroke-width="0.18">CH-002</text>
<text x="459.30" y="407.2" font-size="7.5" text-anchor="middle" fill="#101020" stroke="#101020" stroke-width="0.18">CAQ</text>
<text x="459.30" y="415.2" font-size="7.5" text-anchor="middle" fill="#101020" stroke="#101020" stroke-width="0.18">SP-001</text>
<text x="492.65" y="390.6" font-size="7.5" text-anchor="middle" fill="#101020" stroke="#101020" stroke-width="0.18">19</text>
<text x="492.65" y="398.9" font-size="7.5" text-anchor="middle" fill="#101020" stroke="#101020" stroke-width="0.18">CH-002</text>
<text x="492.65" y="407.2" font-size="7.5" text-anchor="middle" fill="#101020" stroke="#101020" stroke-width="0.18">CAQ</text>
<text x="492.65" y="415.2" font-size="7.5" text-anchor="middle" fill="#101020" stroke="#101020" stroke-width="0.18">SP-001</text>
<text x="526.00" y="390.6" font-size="7.5" text-anchor="middle" fill="#101020" stroke="#101020" stroke-width="0.18">20</text>
<text x="526.00" y="398.9" font-size="7.5" text-anchor="middle" fill="#101020" stroke="#101020" stroke-width="0.18">CH-002</text>
<text x="526.00" y="407.2" font-size="7.5" text-anchor="middle" fill="#101020" stroke="#101020" stroke-width="0.18">CAQ</text>
<text x="526.00" y="415.2" font-size="7.5" text-anchor="middle" fill="#101020" stroke="#101020" stroke-width="0.18">SP-001</text>
<text x="559.35" y="390.6" font-size="7.5" text-anchor="middle" fill="#101020" stroke="#101020" stroke-width="0.18">21</text>
<text x="559.35" y="398.9" font-size="7.5" text-anchor="middle" fill="#101020" stroke="#101020" stroke-width="0.18">CH-002</text>
<text x="559.35" y="407.2" font-size="7.5" text-anchor="middle" fill="#101020" stroke="#101020" stroke-width="0.18">CAQ</text>
<text x="559.35" y="415.2" font-size="7.5" text-anchor="middle" fill="#101020" stroke="#101020" stroke-width="0.18">SP-001</text>
<text x="592.70" y="390.6" font-size="7.5" text-anchor="middle" fill="#101020" stroke="#101020" stroke-width="0.18">22</text>
<text x="592.70" y="398.9" font-size="7.5" text-anchor="middle" fill="#101020" stroke="#101020" stroke-width="0.18">CH-002</text>
<text x="592.70" y="407.2" font-size="7.5" text-anchor="middle" fill="#101020" stroke="#101020" stroke-width="0.18">CAQ</text>
<text x="592.70" y="415.2" font-size="7.5" text-anchor="middle" fill="#101020" stroke="#101020" stroke-width="0.18">SP-001</text>
<text x="626.05" y="390.6" font-size="7.5" text-anchor="middle" fill="#101020" stroke="#101020" stroke-width="0.18">23</text>
<text x="626.05" y="398.9" font-size="7.5" text-anchor="middle" fill="#101020" stroke="#101020" stroke-width="0.18">CH-002</text>
<text x="626.05" y="407.2" font-size="7.5" text-anchor="middle" fill="#101020" stroke="#101020" stroke-width="0.18">CAQ</text>
<text x="626.05" y="415.2" font-size="7.5" text-anchor="middle" fill="#101020" stroke="#101020" stroke-width="0.18">SP-001</text>
<rect x="671.5" y="226.25" width="204.5" height="37.07" fill="url(#orT)"/>
<rect x="671.5" y="263.32" width="204.5" height="6.74" fill="url(#ylT)"/>
<rect x="671.5" y="270.06" width="204.5" height="53.92" fill="#93ef93"/>
<rect x="671.5" y="323.98" width="204.5" height="6.74" fill="url(#ylB)"/>
<rect x="671.5" y="330.72" width="204.5" height="44.03" fill="url(#orB)"/>
<line x1="671.5" x2="876" y1="270.06" y2="270.06" stroke="#eef22c" stroke-width="1.2"/>
<line x1="671.5" x2="876" y1="323.98" y2="323.98" stroke="#eef22c" stroke-width="1.2"/>
<line x1="671.5" x2="876" y1="239.73" y2="239.73" stroke="#606060" stroke-opacity="0.25" stroke-width="1" stroke-dasharray="1 1"/>
<line x1="671.5" x2="876" y1="253.21" y2="253.21" stroke="#606060" stroke-opacity="0.25" stroke-width="1" stroke-dasharray="1 1"/>
<line x1="671.5" x2="876" y1="266.69" y2="266.69" stroke="#606060" stroke-opacity="0.25" stroke-width="1" stroke-dasharray="1 1"/>
<line x1="671.5" x2="876" y1="280.17" y2="280.17" stroke="#606060" stroke-opacity="0.25" stroke-width="1" stroke-dasharray="1 1"/>
<line x1="671.5" x2="876" y1="293.65" y2="293.65" stroke="#606060" stroke-opacity="0.25" stroke-width="1" stroke-dasharray="1 1"/>
<line x1="671.5" x2="876" y1="307.13" y2="307.13" stroke="#606060" stroke-opacity="0.25" stroke-width="1" stroke-dasharray="1 1"/>
<line x1="671.5" x2="876" y1="320.61" y2="320.61" stroke="#606060" stroke-opacity="0.25" stroke-width="1" stroke-dasharray="1 1"/>
<line x1="671.5" x2="876" y1="334.09" y2="334.09" stroke="#606060" stroke-opacity="0.25" stroke-width="1" stroke-dasharray="1 1"/>
<line x1="671.5" x2="876" y1="347.57" y2="347.57" stroke="#606060" stroke-opacity="0.25" stroke-width="1" stroke-dasharray="1 1"/>
<line x1="671.5" x2="876" y1="361.05" y2="361.05" stroke="#606060" stroke-opacity="0.25" stroke-width="1" stroke-dasharray="1 1"/>
<line x1="671.5" x2="876" y1="297.02" y2="297.02" stroke="#3ccc3c" stroke-width="1.1"/>
<line x1="671.5" x2="876" y1="263.32" y2="263.32" stroke="#f83c1c" stroke-width="2"/>
<line x1="671.5" x2="876" y1="330.72" y2="330.72" stroke="#f83c1c" stroke-width="2"/>
<line x1="693.80" x2="693.80" y1="226.25" y2="374.75" stroke="#606060" stroke-opacity="0.45" stroke-width="1" stroke-dasharray="1 1"/>
<line x1="716.60" x2="716.60" y1="226.25" y2="374.75" stroke="#606060" stroke-opacity="0.45" stroke-width="1" stroke-dasharray="1 1"/>
<line x1="739.40" x2="739.40" y1="226.25" y2="374.75" stroke="#606060" stroke-opacity="0.45" stroke-width="1" stroke-dasharray="1 1"/>
<line x1="762.20" x2="762.20" y1="226.25" y2="374.75" stroke="#606060" stroke-opacity="0.45" stroke-width="1" stroke-dasharray="1 1"/>
<line x1="785.00" x2="785.00" y1="226.25" y2="374.75" stroke="#606060" stroke-opacity="0.45" stroke-width="1" stroke-dasharray="1 1"/>
<line x1="807.80" x2="807.80" y1="226.25" y2="374.75" stroke="#606060" stroke-opacity="0.45" stroke-width="1" stroke-dasharray="1 1"/>
<line x1="830.60" x2="830.60" y1="226.25" y2="374.75" stroke="#606060" stroke-opacity="0.45" stroke-width="1" stroke-dasharray="1 1"/>
<line x1="853.40" x2="853.40" y1="226.25" y2="374.75" stroke="#606060" stroke-opacity="0.45" stroke-width="1" stroke-dasharray="1 1"/>
<rect x="671.5" y="276.8" width="22.30" height="7.10" fill="#00e400" stroke="#111" stroke-width="1"/>
<rect x="671.5" y="283.9" width="136.30" height="6.70" fill="#00e400" stroke="#111" stroke-width="1"/>
<rect x="671.5" y="290.6" width="113.50" height="6.60" fill="#00e400" stroke="#111" stroke-width="1"/>
<rect x="671.5" y="297.2" width="181.90" height="7.10" fill="#00e400" stroke="#111" stroke-width="1"/>
<rect x="671.5" y="304.3" width="113.50" height="6.90" fill="#00e400" stroke="#111" stroke-width="1"/>
<rect x="671.5" y="311.2" width="45.10" height="6.50" fill="#00e400" stroke="#111" stroke-width="1"/>
<path d="M672.14 263.32 L672.16 263.45 L672.19 263.59 L672.21 263.72 L672.24 263.86 L672.26 263.99 L672.29 264.13 L672.32 264.26 L672.35 264.40 L672.38 264.53 L672.41 264.67 L672.44 264.80 L672.47 264.94 L672.50 265.07 L672.54 265.21 L672.57 265.34 L672.61 265.48 L672.65 265.61 L672.69 265.75 L672.73 265.88 L672.77 266.02 L672.82 266.15 L672.86 266.29 L672.91 266.42 L672.95 266.56 L673.00 266.69 L673.05 266.82 L673.11 266.96 L673.16 267.09 L673.21 267.23 L673.27 267.36 L673.33 267.50 L673.39 267.63 L673.45 267.77 L673.52 267.90 L673.58 268.04 L673.65 268.17 L673.72 268.31 L673.79 268.44 L673.87 268.58 L673.94 268.71 L674.02 268.85 L674.10 268.98 L674.19 269.12 L674.27 269.25 L674.36 269.39 L674.45 269.52 L674.55 269.66 L674.64 269.79 L674.74 269.93 L674.84 270.06 L674.95 270.19 L675.06 270.33 L675.17 270.46 L675.28 270.60 L675.40 270.73 L675.52 270.87 L675.64 271.00 L675.77 271.14 L675.90 271.27 L676.03 271.41 L676.17 271.54 L676.31 271.68 L676.46 271.81 L676.60 271.95 L676.76 272.08 L676.91 272.22 L677.08 272.35 L677.24 272.49 L677.41 272.62 L677.59 272.76 L677.76 272.89 L677.95 273.03 L678.14 273.16 L678.33 273.30 L678.53 273.43 L678.73 273.56 L678.94 273.70 L679.15 273.83 L679.37 273.97 L679.60 274.10 L679.83 274.24 L680.06 274.37 L680.30 274.51 L680.55 274.64 L680.80 274.78 L681.06 274.91 L681.33 275.05 L681.60 275.18 L681.88 275.32 L682.17 275.45 L682.46 275.59 L682.76 275.72 L683.06 275.86 L683.38 275.99 L683.70 276.13 L684.03 276.26 L684.36 276.40 L684.70 276.53 L685.06 276.67 L685.41 276.80 L685.78 276.93 L686.16 277.07 L686.54 277.20 L686.93 277.34 L687.33 277.47 L687.74 277.61 L688.16 277.74 L688.59 277.88 L689.03 278.01 L689.47 278.15 L689.93 278.28 L690.39 278.42 L690.87 278.55 L691.35 278.69 L691.84 278.82 L692.35 278.96 L692.86 279.09 L693.39 279.23 L693.92 279.36 L694.47 279.50 L695.03 279.63 L695.60 279.77 L696.17 279.90 L696.76 280.04 L697.37 280.17 L697.98 280.30 L698.60 280.44 L699.24 280.57 L699.89 280.71 L700.55 280.84 L701.22 280.98 L701.91 281.11 L702.60 281.25 L703.31 281.38 L704.04 281.52 L704.77 281.65 L705.52 281.79 L706.28 281.92 L707.05 282.06 L707.84 282.19 L708.64 282.33 L709.45 282.46 L710.28 282.60 L711.12 282.73 L711.97 282.87 L712.84 283.00 L713.72 283.14 L714.62 283.27 L715.52 283.41 L716.45 283.54 L717.38 283.67 L718.33 283.81 L719.30 283.94 L720.28 284.08 L721.27 284.21 L722.28 284.35 L723.30 284.48 L724.34 284.62 L725.39 284.75 L726.45 284.89 L727.53 285.02 L728.62 285.16 L729.73 285.29 L730.85 285.43 L731.99 285.56 L733.13 285.70 L734.30 285.83 L735.48 285.97 L736.67 286.10 L737.87 286.24 L739.09 286.37 L740.32 286.51 L741.57 286.64 L742.83 286.78 L744.10 286.91 L745.39 287.04 L746.69 287.18 L748.00 287.31 L749.33 287.45 L750.67 287.58 L752.02 287.72 L753.38 287.85 L754.75 287.99 L756.14 288.12 L757.54 288.26 L758.94 288.39 L760.36 288.53 L761.80 288.66 L763.24 288.80 L764.69 288.93 L766.15 289.07 L767.62 289.20 L769.10 289.34 L770.59 289.47 L772.08 289.61 L773.59 289.74 L775.10 289.88 L776.62 290.01 L778.15 290.15 L779.68 290.28 L781.22 290.41 L782.76 290.55 L784.31 290.68 L785.86 290.82 L787.42 290.95 L788.98 291.09 L790.55 291.22 L792.11 291.36 L793.68 291.49 L795.25 291.63 L796.82 291.76 L798.38 291.90 L799.95 292.03 L801.52 292.17 L803.08 292.30 L804.64 292.44 L806.19 292.57 L807.75 292.71 L809.29 292.84 L810.83 292.98 L812.36 293.11 L813.89 293.25 L815.40 293.38 L816.91 293.52 L818.41 293.65 L819.89 293.78 L821.36 293.92 L822.82 294.05 L824.26 294.19 L825.69 294.32 L827.10 294.46 L828.50 294.59 L829.87 294.73 L831.23 294.86 L832.56 295.00 L833.87 295.13 L835.16 295.27 L836.42 295.40 L837.66 295.54 L838.87 295.67 L840.04 295.81 L841.19 295.94 L842.31 296.08 L843.39 296.21 L844.44 296.35 L845.44 296.48 L846.41 296.62 L847.34 296.75 L848.22 296.89 L849.06 297.02 L849.85 297.15 L850.58 297.29 L851.26 297.42 L851.88 297.56 L852.44 297.69 L852.93 297.83 L853.33 297.96 L853.65 298.10 L853.86 298.23 L853.86 298.37 L853.65 298.50 L853.33 298.64 L852.93 298.77 L852.44 298.91 L851.88 299.04 L851.26 299.18 L850.58 299.31 L849.85 299.45 L849.06 299.58 L848.22 299.72 L847.34 299.85 L846.41 299.99 L845.44 300.12 L844.44 300.26 L843.39 300.39 L842.31 300.52 L841.19 300.66 L840.04 300.79 L838.87 300.93 L837.66 301.06 L836.42 301.20 L835.16 301.33 L833.87 301.47 L832.56 301.60 L831.23 301.74 L829.87 301.87 L828.50 302.01 L827.10 302.14 L825.69 302.28 L824.26 302.41 L822.82 302.55 L821.36 302.68 L819.89 302.82 L818.41 302.95 L816.91 303.09 L815.40 303.22 L813.89 303.36 L812.36 303.49 L810.83 303.63 L809.29 303.76 L807.75 303.89 L806.19 304.03 L804.64 304.16 L803.08 304.30 L801.52 304.43 L799.95 304.57 L798.38 304.70 L796.82 304.84 L795.25 304.97 L793.68 305.11 L792.11 305.24 L790.55 305.38 L788.98 305.51 L787.42 305.65 L785.86 305.78 L784.31 305.92 L782.76 306.05 L781.22 306.19 L779.68 306.32 L778.15 306.46 L776.62 306.59 L775.10 306.73 L773.59 306.86 L772.08 307.00 L770.59 307.13 L769.10 307.26 L767.62 307.40 L766.15 307.53 L764.69 307.67 L763.24 307.80 L761.80 307.94 L760.36 308.07 L758.94 308.21 L757.54 308.34 L756.14 308.48 L754.75 308.61 L753.38 308.75 L752.02 308.88 L750.67 309.02 L749.33 309.15 L748.00 309.29 L746.69 309.42 L745.39 309.56 L744.10 309.69 L742.83 309.83 L741.57 309.96 L740.32 310.10 L739.09 310.23 L737.87 310.37 L736.67 310.50 L735.48 310.63 L734.30 310.77 L733.13 310.90 L731.99 311.04 L730.85 311.17 L729.73 311.31 L728.62 311.44 L727.53 311.58 L726.45 311.71 L725.39 311.85 L724.34 311.98 L723.30 312.12 L722.28 312.25 L721.27 312.39 L720.28 312.52 L719.30 312.66 L718.33 312.79 L717.38 312.93 L716.45 313.06 L715.52 313.20 L714.62 313.33 L713.72 313.47 L712.84 313.60 L711.97 313.74 L711.12 313.87 L710.28 314.00 L709.45 314.14 L708.64 314.27 L707.84 314.41 L707.05 314.54 L706.28 314.68 L705.52 314.81 L704.77 314.95 L704.04 315.08 L703.31 315.22 L702.60 315.35 L701.91 315.49 L701.22 315.62 L700.55 315.76 L699.89 315.89 L699.24 316.03 L698.60 316.16 L697.98 316.30 L697.37 316.43 L696.76 316.57 L696.17 316.70 L695.60 316.84 L695.03 316.97 L694.47 317.11 L693.92 317.24 L693.39 317.37 L692.86 317.51 L692.35 317.64 L691.84 317.78 L691.35 317.91 L690.87 318.05 L690.39 318.18 L689.93 318.32 L689.47 318.45 L689.03 318.59 L688.59 318.72 L688.16 318.86 L687.74 318.99 L687.33 319.13 L686.93 319.26 L686.54 319.40 L686.16 319.53 L685.78 319.67 L685.41 319.80 L685.06 319.94 L684.70 320.07 L684.36 320.21 L684.03 320.34 L683.70 320.48 L683.38 320.61 L683.06 320.74 L682.76 320.88 L682.46 321.01 L682.17 321.15 L681.88 321.28 L681.60 321.42 L681.33 321.55 L681.06 321.69 L680.80 321.82 L680.55 321.96 L680.30 322.09 L680.06 322.23 L679.83 322.36 L679.60 322.50 L679.37 322.63 L679.15 322.77 L678.94 322.90 L678.73 323.04 L678.53 323.17 L678.33 323.31 L678.14 323.44 L677.95 323.58 L677.76 323.71 L677.59 323.85 L677.41 323.98 L677.24 324.11 L677.08 324.25 L676.91 324.38 L676.76 324.52 L676.60 324.65 L676.46 324.79 L676.31 324.92 L676.17 325.06 L676.03 325.19 L675.90 325.33 L675.77 325.46 L675.64 325.60 L675.52 325.73 L675.40 325.87 L675.28 326.00 L675.17 326.14 L675.06 326.27 L674.95 326.41 L674.84 326.54 L674.74 326.68 L674.64 326.81 L674.55 326.95 L674.45 327.08 L674.36 327.22 L674.27 327.35 L674.19 327.48 L674.10 327.62 L674.02 327.75 L673.94 327.89 L673.87 328.02 L673.79 328.16 L673.72 328.29 L673.65 328.43 L673.58 328.56 L673.52 328.70 L673.45 328.83 L673.39 328.97 L673.33 329.10 L673.27 329.24 L673.21 329.37 L673.16 329.51 L673.11 329.64 L673.05 329.78 L673.00 329.91 L672.95 330.05 L672.91 330.18 L672.86 330.32 L672.82 330.45 L672.77 330.59 L672.73 330.72" fill="none" stroke="#1a1ae6" stroke-width="1.6"/>
<rect x="671.5" y="226.5" width="204.5" height="149" fill="none" stroke="#1a1a1a" stroke-width="1"/>
<line x1="671.2" x2="671.2" y1="226" y2="375" stroke="#1a1450" stroke-width="1.6"/>
<text x="671.00" y="382.8" font-size="7.4" text-anchor="middle" fill="#101020" stroke="#101020" stroke-width="0.18">0</text>
<text x="693.80" y="382.8" font-size="7.4" text-anchor="middle" fill="#101020" stroke="#101020" stroke-width="0.18">1</text>
<text x="716.60" y="382.8" font-size="7.4" text-anchor="middle" fill="#101020" stroke="#101020" stroke-width="0.18">2</text>
<text x="739.40" y="382.8" font-size="7.4" text-anchor="middle" fill="#101020" stroke="#101020" stroke-width="0.18">3</text>
<text x="762.20" y="382.8" font-size="7.4" text-anchor="middle" fill="#101020" stroke="#101020" stroke-width="0.18">4</text>
<text x="785.00" y="382.8" font-size="7.4" text-anchor="middle" fill="#101020" stroke="#101020" stroke-width="0.18">5</text>
<text x="807.80" y="382.8" font-size="7.4" text-anchor="middle" fill="#101020" stroke="#101020" stroke-width="0.18">6</text>
<text x="830.60" y="382.8" font-size="7.4" text-anchor="middle" fill="#101020" stroke="#101020" stroke-width="0.18">7</text>
<text x="853.40" y="382.8" font-size="7.4" text-anchor="middle" fill="#101020" stroke="#101020" stroke-width="0.18">8</text>
<text x="876.20" y="382.8" font-size="7.4" text-anchor="middle" fill="#101020" stroke="#101020" stroke-width="0.18">9</text>
</svg><!--/CHART-->

<!-- chart h-scrollbar -->
<div class="a" style="left:1px;top:420px;width:897px;height:11px;background:#ebebeb;border-top:1px solid #dadada"></div>
<svg class="a" style="left:5px;top:422px" width="6" height="7" viewBox="0 0 6 7"><path d="M1 3.5 L4.5 0.8 V6.2 Z" fill="#222"/></svg>
<svg class="a" style="left:889px;top:422px" width="6" height="7" viewBox="0 0 6 7"><path d="M5 3.5 L1.5 0.8 V6.2 Z" fill="#222"/></svg>
<div class="a" style="left:176px;top:420.5px;width:580px;height:9.5px;border-radius:3px 1px 1px 3px;background:linear-gradient(#f4f4f4,#dedede 45%,#c6c6c6);border:1px solid #b8b8b8;border-top-color:#d0d0d0"></div>
<div class="a" style="left:463px;top:423px;width:6px;height:4px;background:repeating-linear-gradient(90deg,#333 0 1px,transparent 1px 2px)"></div>
<div class="a" style="left:1px;top:431.5px;width:898px;height:1.5px;background:#bdbdbd"></div>
<div class="a" style="left:1px;top:433px;width:898px;height:5px;background:#fdfdfd"></div>
<div class="a" style="left:443px;top:434px;width:14px;height:3px;background:repeating-linear-gradient(90deg,#333 0 1px,transparent 1px 2px)"></div>
<div class="a" style="left:1px;top:438px;width:898px;height:1px;background:#b4b4b4"></div>
<!-- table body bg -->
<div class="a" style="left:1px;top:439px;width:898px;height:80px;background:#f8f8f8"></div>
<!-- header cells -->
<div class="a" style="left:1px;top:439px;width:466.5px;height:39.5px;background:#efefef"></div>
<div class="a" style="left:1px;top:478.5px;width:466.5px;height:25.5px;background:#efefef"></div>
<div class="a" style="left:1px;top:506px;width:466.5px;height:10.5px;background:#f6f6f6"></div>
<!-- light grid lines -->
<div class="a" style="left:29px;top:439px;width:1px;height:78px;background:#dcdcdc"></div>
<div class="a" style="left:185px;top:439px;width:1px;height:78px;background:#dcdcdc"></div>
<div class="a" style="left:467px;top:439px;width:1px;height:78px;background:#dcdcdc"></div>
<div class="a" style="left:1px;top:478px;width:466px;height:1px;background:#dcdcdc"></div>
<div class="a" style="left:1px;top:491px;width:466px;height:1px;background:#dcdcdc"></div>
<div class="a" style="left:30px;top:479px;width:84px;height:25px;background:#efefef"></div>
<!-- black lines -->
<div class="a" style="left:114px;top:439px;width:1.6px;height:79px;background:#111"></div>
<div class="a" style="left:237.6px;top:439px;width:1.6px;height:79px;background:#111"></div>
<div class="a" style="left:358px;top:439px;width:1.6px;height:79px;background:#111"></div>
<div class="a" style="left:1px;top:504px;width:886px;height:1.8px;background:#0a0a0a"></div>
<div class="a" style="left:1px;top:516.6px;width:886px;height:1.6px;background:#0a0a0a"></div>
<!-- header text -->
<div class="t" style="-webkit-text-stroke:0.08px currentColor;left:1px;top:455.5px;width:28px;text-align:center;font-size:8.2px">Smpl.</div>
<div class="t" style="-webkit-text-stroke:0.08px currentColor;left:30px;top:455.5px;width:84px;text-align:center;font-size:8.2px">Date / Time</div>
<div class="t" style="-webkit-text-stroke:0.08px currentColor;left:116px;top:455.5px;width:69px;text-align:center;font-size:8.2px">Batch</div>
<div class="t" style="-webkit-text-stroke:0.08px currentColor;left:186px;top:447.5px;width:52px;text-align:center;font-size:8.2px;line-height:8.6px">10<br>Ni2+<br>[pH]</div>
<div class="t" style="-webkit-text-stroke:0.08px currentColor;left:239px;top:447.5px;width:119px;text-align:center;font-size:8.2px;line-height:8.6px">20<br>Water content<br>[mg/kg]</div>
<div class="t" style="-webkit-text-stroke:0.08px currentColor;left:360px;top:447.5px;width:107px;text-align:center;font-size:8.2px;line-height:8.6px">30<br>Contaminant</div>
<!-- rows -->
<div class="t" style="-webkit-text-stroke:0.08px currentColor;left:1px;top:482px;width:26px;text-align:right;font-size:8.2px">25</div>
<div class="t" style="-webkit-text-stroke:0.08px currentColor;left:35px;top:482px;font-size:8.2px;letter-spacing:-0.12px">21.10.2016 11:12:33</div>
<div class="t" style="-webkit-text-stroke:0.08px currentColor;left:117px;top:482px;font-size:8.2px">CH-002</div>
<div class="t" style="-webkit-text-stroke:0.08px currentColor;left:186px;top:482px;width:49.5px;text-align:right;font-size:8.2px">6,6</div>
<div class="t" style="-webkit-text-stroke:0.08px currentColor;left:239px;top:482px;width:116.5px;text-align:right;font-size:8.2px">7,7</div>
<div class="t" style="-webkit-text-stroke:0.08px currentColor;left:361.5px;top:482px;font-size:8.2px">oK</div>
<div class="t" style="-webkit-text-stroke:0.08px currentColor;left:1px;top:495px;width:26px;text-align:right;font-size:8.2px">26</div>
<div class="t" style="-webkit-text-stroke:0.08px currentColor;left:117px;top:495px;font-size:8.2px">CH-002</div>
<div class="t" style="-webkit-text-stroke:0.08px currentColor;left:186px;top:495px;width:49.5px;text-align:right;font-size:8.2px">6,6</div>
<div class="t" style="-webkit-text-stroke:0.08px currentColor;left:239px;top:495px;width:116.5px;text-align:right;font-size:8.2px">8,5</div>
<div class="t" style="-webkit-text-stroke:0.08px currentColor;left:361.5px;top:495px;font-size:8.2px">oK</div>
<div class="t" style="-webkit-text-stroke:0.08px currentColor;left:1px;top:508px;width:26px;text-align:right;font-size:8.2px">27</div>
<div class="t" style="-webkit-text-stroke:0.08px currentColor;left:35px;top:508px;font-size:8.2px;letter-spacing:-0.12px">21.10.2016 11:17:48</div>
<div class="t" style="-webkit-text-stroke:0.08px currentColor;left:117px;top:508px;font-size:8.2px">CH-002</div>
<div class="t" style="-webkit-text-stroke:0.08px currentColor;left:186px;top:508px;width:49.5px;text-align:right;font-size:8.2px;font-weight:bold">6,6</div>
<div class="t" style="-webkit-text-stroke:0.08px currentColor;left:239px;top:508px;width:116.5px;text-align:right;font-size:8.2px;font-weight:bold">9,7</div>
<!-- v scrollbar -->
<div class="a" style="left:887px;top:439px;width:11px;height:79px;background:#ececec;border-left:1px solid #e0e0e0"></div>
<svg class="a" style="left:889px;top:443px" width="7" height="6" viewBox="0 0 7 6"><path d="M3.5 1.5 L5.8 4.2 H1.2 Z" fill="#333"/></svg>
<svg class="a" style="left:889px;top:510px" width="7" height="6" viewBox="0 0 7 6"><path d="M3.5 4.2 L5.8 1.5 H1.2 Z" fill="#333"/></svg>
<div class="a" style="left:888px;top:496.5px;width:9.5px;height:9.5px;border-radius:1px;background:linear-gradient(90deg,#f2f2f2,#d6d6d6 60%,#c4c4c4);border:1px solid #b0b0b0"></div>
<!-- cursor -->
<svg class="a" style="left:349px;top:510px" width="10" height="16" viewBox="0 0 10 16"><path d="M1 1 L1 12.5 L3.8 10 L5.8 14.5 L7.5 13.8 L5.6 9.4 L9 9.4 Z" fill="#fff" stroke="#222" stroke-width="0.9"/></svg>


<div class="a" style="left:1px;top:518.2px;width:898px;height:75px;background:#f7f7f7"></div>
<div class="t" style="left:9px;top:528px;font-size:11.3px;color:#111">Smpl.:</div>
<div class="t" style="left:9px;top:548.5px;font-size:11.3px;color:#111">Gauge:</div>
<div class="a" style="left:67px;top:524px;width:312px;height:18px;border:1px solid #adadad;border-top-color:#a0a0a0;background:#f8f8f8"></div>
<div class="a" style="left:67px;top:544.5px;width:312px;height:18px;border:1px solid #adadad;border-top-color:#a0a0a0;background:#f8f8f8"></div>
<div class="t" style="left:70px;top:528px;font-size:11.8px;color:#111">27 - 21.10.2016 11:17:48</div>
<div class="t" style="left:70px;top:548.5px;font-size:11.3px;color:#111">SP-001</div>
<div class="a" style="left:392.5px;top:524px;width:502px;height:18px;border:1px solid #adadad;border-top-color:#a0a0a0;background:#f8f8f8"></div>
<div class="t" style="left:394.5px;top:528px;font-size:11px;color:#111">20 - Water content [mg/kg]</div>
<!-- Back -->
<div class="a" style="left:392px;top:564.5px;width:66.5px;height:22px;border:1px solid #c4c4c4;background:#f6f6f6"></div>
<svg class="a" style="left:393px;top:570px" width="13" height="11" viewBox="0 0 13 11"><path d="M1 5.5 L6.5 1 V10 Z M6.5 5.5 L12 1 V10 Z" fill="#3a6db5"/></svg>
<div class="t" style="left:418px;top:570.5px;font-size:11.3px;color:#111"><span style="text-decoration:underline">B</span>ack</div>
<!-- progress -->
<div class="a" style="left:461px;top:565px;width:294px;height:21.5px;border:2px solid #111;background:#fff"></div>
<div class="a" style="left:464px;top:567.5px;width:152px;height:16.5px;background:#00e600"></div>
<div class="t" style="left:600px;top:569.5px;width:144px;text-align:right;font-size:12.6px;color:#111">8,0&nbsp; mg/kg</div>
<!-- Next -->
<div class="a" style="left:759px;top:564.5px;width:67px;height:22px;border:1px solid #c4c4c4;background:#f6f6f6"></div>
<div class="t" style="left:775px;top:570.5px;font-size:11.3px;color:#111"><span style="text-decoration:underline">N</span>ext</div>
<svg class="a" style="left:809px;top:570px" width="13" height="11" viewBox="0 0 13 11"><path d="M12 5.5 L6.5 1 V10 Z M6.5 5.5 L1 1 V10 Z" fill="#3a6db5"/></svg>
<!-- Contin -->
<div class="a" style="left:827.5px;top:564.5px;width:67px;height:22px;border:1px solid #c4c4c4;background:#f6f6f6"></div>
<div class="t" style="left:834.5px;top:570.5px;font-size:11.3px;color:#111">Contin...</div>
<svg class="a" style="left:876px;top:566px" width="18" height="18" viewBox="876 566 18 18">
 <path d="M882.3 569.8 Q883.7 569.2 884.9 570 L884.7 572.2 H887.8 L887.4 574.3 H885.2 L884.2 577 L882.8 580.8 H880 L880.6 577.4 Q882 576.5 881.2 575.2 L880 575 L880.3 572.2 H882.6 Z" fill="#2a64b8"/>
 <circle cx="888" cy="577.6" r="3.6" fill="#1f9448" stroke="#f6f6f6" stroke-width="0.8"/>
 <path d="M886.2 577.6 L887.6 579 L890 576.4" stroke="#fff" stroke-width="1.1" fill="none"/>
</svg>

</body></html>
